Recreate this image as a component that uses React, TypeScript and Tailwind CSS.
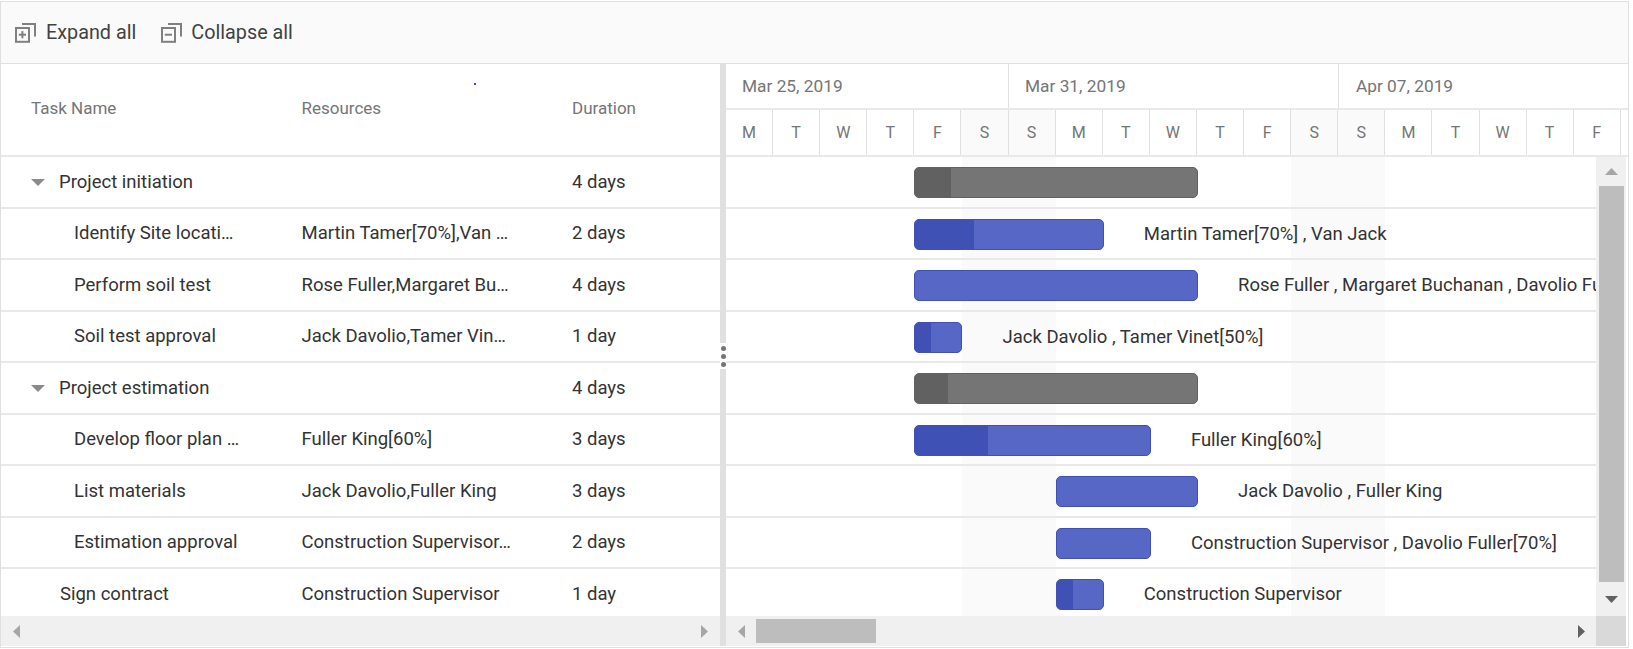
const ROW_H = 51.5;
const DAY_W = 47.1;

const dayLabels = ["M", "T", "W", "T", "F", "S", "S", "M", "T", "W", "T", "F", "S", "S", "M", "T", "W", "T", "F"];

type Task = {
  name: string;
  resources: string;
  duration: string;
  indent: "parent" | "child" | "plain";
  start: number;
  days: number;
  progress: number;
  label?: string;
};

const tasks: Task[] = [
  { name: "Project initiation", resources: "", duration: "4 days", indent: "parent", start: 4, days: 6, progress: 36 },
  { name: "Identify Site location", resources: "Martin Tamer[70%],Van Jack", duration: "2 days", indent: "child", start: 4, days: 4, progress: 59, label: "Martin Tamer[70%] , Van Jack" },
  { name: "Perform soil test", resources: "Rose Fuller,Margaret Buchanan,Davolio Fuller", duration: "4 days", indent: "child", start: 4, days: 6, progress: 0, label: "Rose Fuller , Margaret Buchanan , Davolio Fuller" },
  { name: "Soil test approval", resources: "Jack Davolio,Tamer Vinet[50%]", duration: "1 day", indent: "child", start: 4, days: 1, progress: 16, label: "Jack Davolio , Tamer Vinet[50%]" },
  { name: "Project estimation", resources: "", duration: "4 days", indent: "parent", start: 4, days: 6, progress: 33 },
  { name: "Develop floor plan for estimation", resources: "Fuller King[60%]", duration: "3 days", indent: "child", start: 4, days: 5, progress: 73, label: "Fuller King[60%]" },
  { name: "List materials", resources: "Jack Davolio,Fuller King", duration: "3 days", indent: "child", start: 7, days: 3, progress: 0, label: "Jack Davolio , Fuller King" },
  { name: "Estimation approval", resources: "Construction Supervisor,Davolio Fuller[70%]", duration: "2 days", indent: "child", start: 7, days: 2, progress: 0, label: "Construction Supervisor , Davolio Fuller[70%]" },
  { name: "Sign contract", resources: "Construction Supervisor", duration: "1 day", indent: "plain", start: 7, days: 1, progress: 16, label: "Construction Supervisor" },
];

function StackIcon({ minus }: { minus?: boolean }) {
  return (
    <svg width="21" height="20" viewBox="0 0 21 20" fill="none" stroke="#808080" strokeWidth="2" aria-hidden>
      <rect x="1" y="5" width="13" height="13.800" />
      <path d="M7 1h13v12.500" />
      <path d="M3.800 11.700h7.200" />
      {!minus && <path d="M7.400 8.100v7.200" />}
    </svg>
  );
}

function Arrow({ dir, dark }: { dir: "left" | "right" | "up" | "down"; dark?: boolean }) {
  const fill = dark ? "#616161" : "#a6a6a6";
  if (dir === "left" || dir === "right") {
    return (
      <svg width="7" height="13" viewBox="0 0 7 13" aria-hidden>
        <path d={dir === "left" ? "M7 0v13L0 6.5z" : "M0 0v13l7-6.5z"} fill={fill} />
      </svg>
    );
  }
  return (
    <svg width="13" height="7" viewBox="0 0 13 7" aria-hidden>
      <path d={dir === "up" ? "M0 7h13L6.500 0z" : "M0 0h13L6.500 7z"} fill={fill} />
    </svg>
  );
}

function GridRow({ task }: { task: Task }) {
  return (
    <div className="flex items-center border-b-2 border-[#e9e9e9] text-[18.500px] text-[#333333]" style={{ height: ROW_H }}>
      <div className="mt-[2px] flex w-[270px] shrink-0 items-center pr-[30px]">
        {task.indent === "parent" && (
          <svg width="14" height="7" viewBox="0 0 14 7" className="ml-[30px] mr-[14px] shrink-0" aria-hidden>
            <path d="M0 0h14L7 7z" fill="#8a8a8a" />
          </svg>
        )}
        <span
          className={
            task.indent === "child"
              ? "truncate pl-[73px]"
              : task.indent === "plain"
                ? "truncate pl-[59px]"
                : "truncate"
          }
        >
          {task.name}
        </span>
      </div>
      <div className="mt-[2px] w-[270px] shrink-0 truncate pl-[30.500px] pr-[30px]">{task.resources}</div>
      <div className="mt-[2px] pl-[31px]">{task.duration}</div>
    </div>
  );
}

function ChartRow({ task }: { task: Task }) {
  const parent = task.indent === "parent";
  return (
    <div className="relative flex items-center overflow-hidden border-b-2 border-[#e9e9e9] text-[18.500px] text-[#333333]" style={{ height: ROW_H }}>
      <div
        className={
          parent
            ? "mt-[2px] h-[31px] shrink-0 overflow-hidden rounded-[5px] border border-[#616161] bg-[#757575]"
            : "mt-[2px] h-[31px] shrink-0 overflow-hidden rounded-[5px] border border-[#3f51b5] bg-[#5767c6]"
        }
        style={{ marginLeft: task.start * DAY_W, width: task.days * DAY_W + 1 }}
      >
        {task.progress > 0 && (
          <div className={parent ? "h-full bg-[#616161]" : "h-full bg-[#3f51b5]"} style={{ width: task.progress }} />
        )}
      </div>
      {task.label && <span className="ml-[40px] mt-[3px] shrink-0 whitespace-nowrap">{task.label}</span>}
    </div>
  );
}

export default function App() {
  return (
    <div className="w-[1629px] pt-px font-['Roboto',sans-serif]">
      <div className="flex h-[647px] flex-col border border-[#e0e0e0] bg-white pb-px">
        <div className="flex h-[62px] shrink-0 items-center border-b border-[#e0e0e0] bg-[#fafafa] pl-[14px] pt-[1px] text-[19.800px] text-[#424242]">
          <StackIcon />
          <span className="ml-[10px]">Expand all</span>
          <span className="ml-[25px]">
            <StackIcon minus />
          </span>
          <span className="ml-[9px]">Collapse all</span>
        </div>

        <div className="flex min-h-0 flex-1">
          {/* tree grid */}
          <div className="relative flex w-[719px] shrink-0 flex-col">
            <div className="flex h-[93px] shrink-0 items-center border-b-2 border-[#e9e9e9] pb-[2px] text-[17px] text-[#757575]">
              <div className="w-[270px] pl-[30px]">Task Name</div>
              <div className="w-[270px] pl-[30.500px]">Resources</div>
              <div className="pl-[31px]">Duration</div>
            </div>
            <div className="absolute left-[473px] top-[19px] h-[2px] w-[2px] rounded-full bg-[#0000ff]" />
            <div className="min-h-0 flex-1 overflow-hidden">
              {tasks.map((t) => (
                <GridRow key={t.name} task={t} />
              ))}
            </div>
            <div className="flex h-[30px] shrink-0 items-center justify-between bg-[#f0f0f0] pl-[12px] pr-[12px]">
              <Arrow dir="left" />
              <Arrow dir="right" />
            </div>
          </div>

          {/* splitter */}
          <div className="relative w-[6px] shrink-0 bg-[#e0e0e0]">
            <div className="absolute left-0 top-[279px] flex h-[26px] w-[6px] flex-col items-center justify-center gap-[3px] bg-white">
              <span className="h-[5px] w-[5px] rounded-full bg-[#757575]" />
              <span className="h-[5px] w-[5px] rounded-full bg-[#757575]" />
              <span className="h-[5px] w-[5px] rounded-full bg-[#757575]" />
            </div>
          </div>

          {/* chart */}
          <div className="flex min-w-0 flex-1 flex-col">
            <div className="h-[93px] shrink-0 overflow-hidden border-b-2 border-[#e9e9e9] text-[#757575]">
              <div className="flex h-[46px] border-b-2 border-[#e9e9e9] text-[17.300px]">
                <div className="w-[282px] shrink-0 pl-[16px] pt-[10px]">Mar 25, 2019</div>
                <div className="w-[330px] shrink-0 border-l border-[#e0e0e0] pl-[16px] pt-[10px]">Mar 31, 2019</div>
                <div className="flex-1 border-l border-[#e0e0e0] pl-[17px] pt-[10px]">Apr 07, 2019</div>
              </div>
              <div className="flex h-[45px] text-[16px]">
                {dayLabels.map((d, i) => (
                  <div
                    key={i}
                    className={
                      i === 5 || i === 6 || i === 12 || i === 13
                        ? "flex shrink-0 items-center justify-center border-r border-[#e0e0e0] bg-[#fafafa]"
                        : "flex shrink-0 items-center justify-center border-r border-[#e0e0e0]"
                    }
                    style={{ width: DAY_W }}
                  >
                    {d}
                  </div>
                ))}
              </div>
            </div>

            <div className="mr-[2px] flex min-h-0 flex-1">
              <div className="relative min-w-0 flex-1 overflow-hidden">
                <div className="absolute bottom-0 top-0 bg-[#fafafa]" style={{ left: 5 * DAY_W, width: 2 * DAY_W }} />
                <div className="absolute bottom-0 top-0 bg-[#fafafa]" style={{ left: 12 * DAY_W, width: 2 * DAY_W }} />
                <div className="relative">
                  {tasks.map((t) => (
                    <ChartRow key={t.name} task={t} />
                  ))}
                </div>
              </div>
              <div className="flex w-[30px] shrink-0 flex-col items-center bg-[#f0f0f0]">
                <div className="flex h-[29px] shrink-0 items-center justify-center">
                  <Arrow dir="up" />
                </div>
                <div className="w-[25px] flex-1 bg-[#bdbdbd]" />
                <div className="flex h-[34px] shrink-0 items-center justify-center">
                  <Arrow dir="down" dark />
                </div>
              </div>
            </div>

            <div className="mr-[2px] flex h-[30px] shrink-0 items-center bg-[#f0f0f0]">
              <div className="ml-[12px]">
                <Arrow dir="left" />
              </div>
              <div className="ml-[11px] h-[24px] w-[120px] bg-[#bdbdbd]" />
              <div className="ml-auto mr-[11px]">
                <Arrow dir="right" dark />
              </div>
              <div className="h-[30px] w-[30px] bg-[#d9d9d9]" />
            </div>
          </div>
        </div>
      </div>
    </div>
  );
}
